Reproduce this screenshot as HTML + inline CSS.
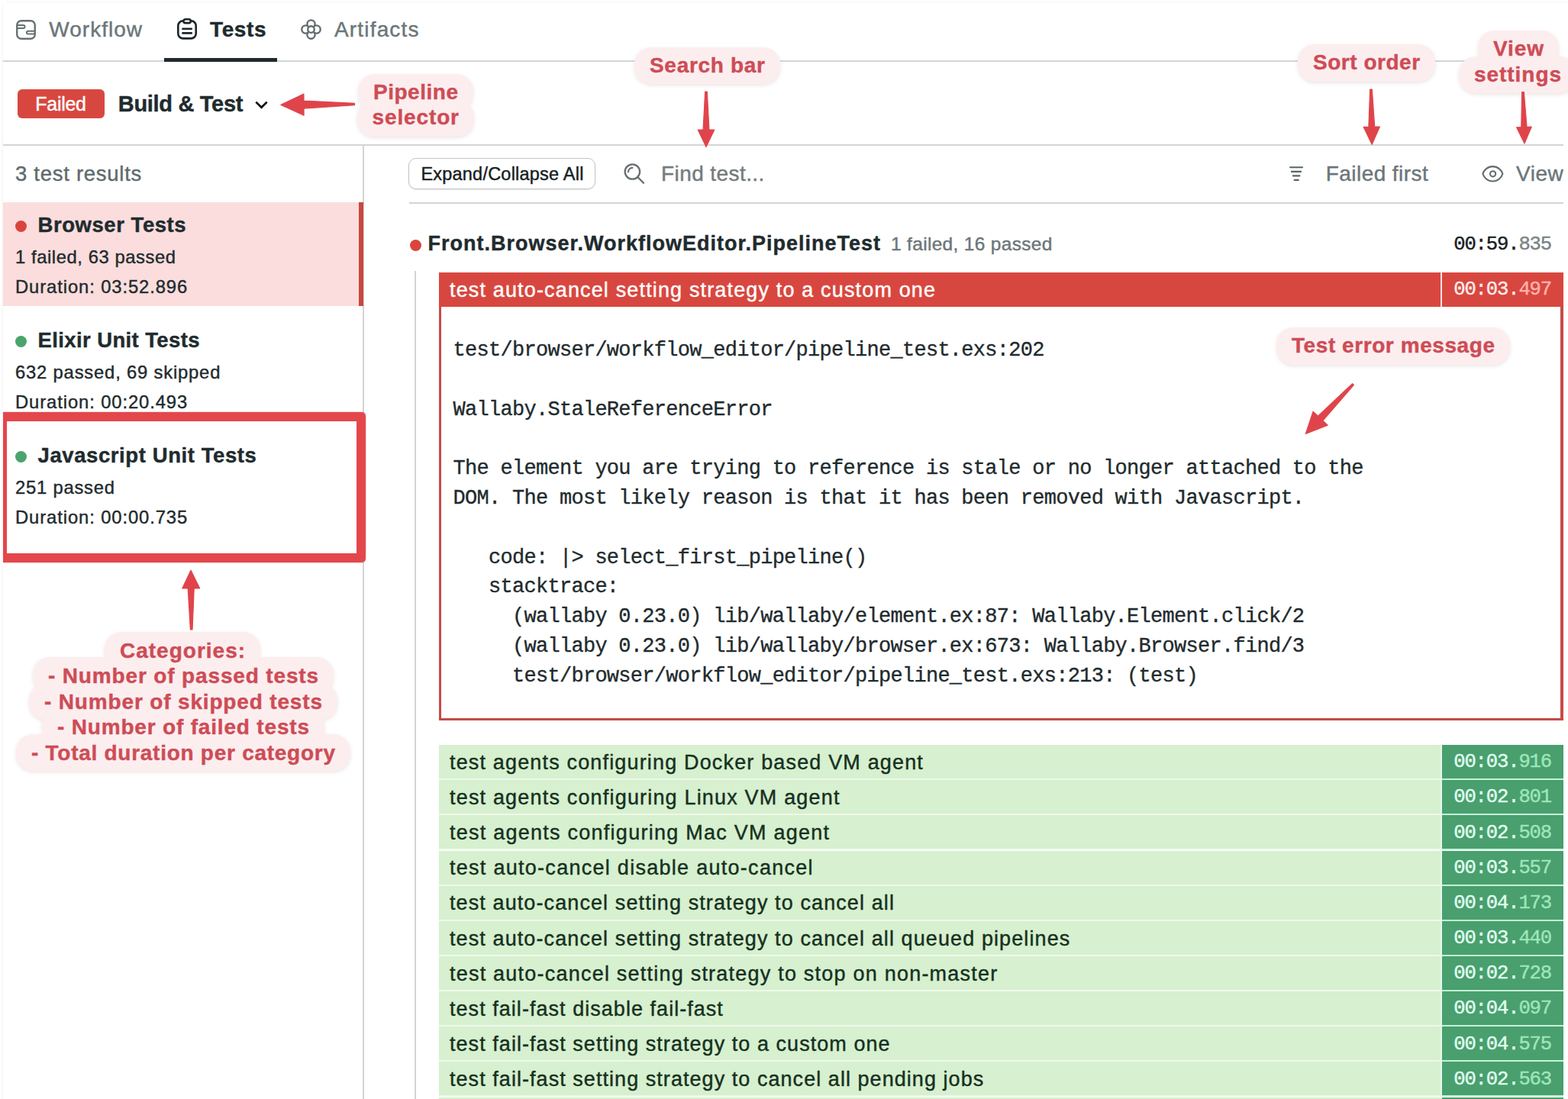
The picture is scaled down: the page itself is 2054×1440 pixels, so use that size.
<!DOCTYPE html>
<html lang="en">
<head>
<meta charset="utf-8">
<title>Test results</title>
<style>
html,body{margin:0;padding:0;background:#fff;}
body{width:2054px;height:1440px;position:relative;overflow:hidden;font-family:'Liberation Sans',sans-serif;color:#1f2b2e;}
.t{position:absolute;white-space:pre;-webkit-text-stroke:0.42px currentColor;}
.abs{position:absolute;}
.hl{position:absolute;height:1.7px;background:#d3d6d6;}
.vl{position:absolute;width:1.7px;background:#d3d5d5;}
.dot{position:absolute;width:15px;height:15px;border-radius:50%;}
.row{position:absolute;left:575px;width:1312px;height:44px;background:#d7f0cf;}
.rt{position:absolute;left:1889px;width:159px;height:44px;background:#499f6e;}
.pill{position:absolute;background:#fceeef;border-radius:22px;}
.pills{position:absolute;left:0;top:0;filter:drop-shadow(0 2px 2.5px rgba(90,40,40,.12));}
svg{position:absolute;overflow:visible;}
</style>
</head>
<body>

<div class="abs" style="left:8px;top:1px;width:2046px;height:3px;background:#fafafa"></div>
<div class="abs" style="left:2px;top:8px;width:2px;height:1432px;background:#f8f8f8"></div>
<nav>
<div class="hl" style="left:4px;top:79px;width:2044px"></div>
<div class="abs" style="left:215px;top:76px;width:148px;height:5px;background:#1f2b2e"></div>
<svg style="left:21px;top:26px" width="26" height="26" viewBox="0 0 26 26" fill="none" stroke="#667174" stroke-width="2.4" stroke-linejoin="round"><rect x="1.25" y="1.25" width="23.5" height="23.5" rx="5.6"/><path d="M1.4 7.1h8.2a1.95 1.95 0 0 1 0 3.9H1.4" stroke-width="2"/><path d="M24.6 14.7h-8.8a1.9 1.9 0 0 0 0 3.8h8.8" stroke-width="2"/></svg>
<span class="t" style="left:64.3px;top:21.6px;font-size:28px;line-height:34px;color:#6b7679;letter-spacing:1.01px;">Workflow</span>
<svg style="left:232px;top:24px" width="26" height="28" viewBox="0 0 26 28" fill="none" stroke="#1c2628" stroke-width="2.6" stroke-linecap="round" stroke-linejoin="round"><rect x="1.3" y="3.4" width="23.4" height="23" rx="6.4"/><rect x="8.4" y="1.3" width="9.4" height="4.8" rx="2.4" fill="#fff"/><path d="M7.4 13.7h11.4M7.4 19.4h11.4"/></svg>
<span class="t" style="left:275.0px;top:21.6px;font-size:28px;line-height:34px;color:#1f2b2e;font-weight:700;letter-spacing:0.63px;">Tests</span>
<svg style="left:394px;top:25.2px" width="27" height="27" viewBox="0 0 27 27" fill="none" stroke="#626b6e" stroke-width="2.35"><circle cx="13.5" cy="6.4" r="5.1"/><circle cx="13.5" cy="20.6" r="5.1"/><circle cx="6.4" cy="13.5" r="5.1"/><circle cx="20.6" cy="13.5" r="5.1"/><circle cx="13.5" cy="13.5" r="4.3" fill="#fff"/></svg>
<span class="t" style="left:438.0px;top:21.6px;font-size:28px;line-height:34px;color:#6b7679;letter-spacing:1.17px;">Artifacts</span>
</nav>
<header>
<div class="abs" style="left:23px;top:117px;width:114px;height:38px;border-radius:6px;background:#d8473f"></div>
<span class="t" style="left:46.3px;top:120.6px;font-size:25px;line-height:30px;color:#fff;letter-spacing:-0.28px;">Failed</span>
<span class="t" style="left:154.8px;top:118.6px;font-size:29px;line-height:35px;color:#1f2b2e;font-weight:700;letter-spacing:-0.31px;">Build &amp; Test</span>
<svg style="left:333.5px;top:131.8px" width="17" height="11" viewBox="0 0 17 11" fill="none" stroke="#0c0c0c" stroke-width="2.7"><path d="M1.3 1.6l7.2 7.2 7.2-7.2"/></svg>
<div class="hl" style="left:4px;top:189px;width:2044px"></div>
</header>
<aside>
<div class="vl" style="left:475px;top:190px;height:1250px"></div>
<span class="t" style="left:20.0px;top:211.0px;font-size:27.5px;line-height:33px;color:#5f6b6e;letter-spacing:0.72px;">3 test results</span>
<div class="abs" style="left:4px;top:265px;width:472px;height:136px;background:#fbdddd"></div>
<div class="abs" style="left:470px;top:265px;width:6px;height:136px;background:#c9483f"></div>
<section>
<div class="dot" style="left:19.5px;top:289px;background:#d9453d"></div>
<span class="t" style="left:49.5px;top:278.2px;font-size:27.5px;line-height:33px;color:#1f2b2e;font-weight:700;letter-spacing:0.55px;">Browser Tests</span>
<span class="t" style="left:20.0px;top:321.9px;font-size:23.8px;line-height:29px;color:#1f2b2e;letter-spacing:0.57px;">1 failed, 63 passed</span>
<span class="t" style="left:20.0px;top:360.6px;font-size:23.8px;line-height:29px;color:#1f2b2e;letter-spacing:0.90px;">Duration: 03:52.896</span>
</section>
<section>
<div class="dot" style="left:19.5px;top:440px;background:#4aa46c"></div>
<span class="t" style="left:49.5px;top:429.2px;font-size:27.5px;line-height:33px;color:#1f2b2e;font-weight:700;letter-spacing:0.39px;">Elixir Unit Tests</span>
<span class="t" style="left:20.0px;top:472.9px;font-size:23.8px;line-height:29px;color:#1f2b2e;letter-spacing:0.81px;">632 passed, 69 skipped</span>
<span class="t" style="left:20.0px;top:511.6px;font-size:23.8px;line-height:29px;color:#1f2b2e;letter-spacing:0.90px;">Duration: 00:20.493</span>
</section>
<section>
<div class="dot" style="left:19.5px;top:591px;background:#4aa46c"></div>
<span class="t" style="left:49.5px;top:580.2px;font-size:27.5px;line-height:33px;color:#1f2b2e;font-weight:700;letter-spacing:0.59px;">Javascript Unit Tests</span>
<span class="t" style="left:20.0px;top:623.9px;font-size:23.8px;line-height:29px;color:#1f2b2e;letter-spacing:0.77px;">251 passed</span>
<span class="t" style="left:20.0px;top:662.6px;font-size:23.8px;line-height:29px;color:#1f2b2e;letter-spacing:0.90px;">Duration: 00:00.735</span>
</section>
</aside>
<main>
<div class="abs" style="left:535px;top:207px;width:242.6px;height:39.1px;border:1.7px solid #c2c6c6;border-radius:10px;background:#fff;box-shadow:0 1px 1.5px rgba(0,0,0,.10)"></div>
<span class="t" style="left:551.4px;top:213.9px;font-size:23.5px;line-height:28px;color:#16211f;letter-spacing:0.22px;">Expand/Collapse All</span>
<svg style="left:817px;top:214px" width="28" height="28" viewBox="0 0 28 28" fill="none" stroke="#666e6f" stroke-width="2.3" stroke-linecap="round"><circle cx="11.4" cy="11" r="9.7"/><path d="M18.4 18l7.6 7.8"/><path d="M6 11.2a5.6 5.6 0 0 1 5.4-5.4" stroke-width="2.2"/></svg>
<span class="t" style="left:866.0px;top:210.8px;font-size:28px;line-height:34px;color:#747b7c;letter-spacing:0.42px;">Find test...</span>
<svg style="left:1688px;top:217px" width="20" height="21" viewBox="0 0 20 21" fill="none" stroke="#5b6466" stroke-width="2.2" stroke-linecap="round"><path d="M2.1 2.25h15.9M3.9 7.9h12.2M5.9 13.3h8.5M7.7 18.9h5.1"/></svg>
<span class="t" style="left:1736.8px;top:210.7px;font-size:28px;line-height:34px;color:#6b7679;letter-spacing:0.43px;">Failed first</span>
<svg style="left:1941px;top:217px" width="29" height="22" viewBox="0 0 29 22" fill="none" stroke="#636c6e" stroke-width="2.1" stroke-linejoin="round"><path d="M1.4 10.8C2.8 6 7.8 1.1 14.4 1.1S26 6 27.4 10.8C26 15.6 21 20.5 14.4 20.5S2.8 15.6 1.4 10.8z"/><circle cx="14.6" cy="10.8" r="3.6"/></svg>
<span class="t" style="left:1986.0px;top:210.7px;font-size:28px;line-height:34px;color:#6b7679;letter-spacing:0.54px;">View</span>
<div class="hl" style="left:536px;top:265px;width:1512px"></div>
<div class="dot" style="left:536.5px;top:313.5px;background:#d9453d"></div>
<span class="t" style="left:560.5px;top:303.2px;font-size:27px;line-height:32px;color:#1f2b2e;font-weight:700;letter-spacing:1.00px;">Front.Browser.WorkflowEditor.PipelineTest</span>
<span class="t" style="left:1167.0px;top:305.4px;font-size:24.5px;line-height:29px;color:#6b7679;letter-spacing:0.32px;">1 failed, 16 passed</span>
<span class="t" style="left:1904.2px;top:305.3px;font-size:25.6px;line-height:31px;color:#16211f;font-family:'Liberation Mono', monospace;letter-spacing:-1.16px;">00:59.<span style="color:#7b8486">835</span></span>
<div class="vl" style="left:543px;top:355px;height:1085px"></div>
<article>
<div class="abs" style="left:575px;top:357px;width:1473px;height:587px;background:#c54b48"></div>
<div class="abs" style="left:575px;top:357px;width:1473px;height:45px;background:#d8473f"></div>
<div class="abs" style="left:578px;top:401.5px;width:1466.3px;height:539.3px;background:#fff"></div>
<div class="abs" style="left:1887px;top:357px;width:2px;height:45px;background:#fbe4e2"></div>
<span class="t" style="left:589.0px;top:363.6px;font-size:27px;line-height:32px;color:#fff;letter-spacing:1.15px;">test auto-cancel setting strategy to a custom one</span>
<span class="t" style="left:1904.2px;top:364.3px;font-size:25.6px;line-height:31px;color:#ffecec;font-family:'Liberation Mono', monospace;letter-spacing:-1.16px;">00:03.<span style="color:#ffb3ad">497</span></span>
<pre class="abs" style="left:593.6px;top:440.1px;margin:0;font-family:'Liberation Mono', monospace;font-size:27px;letter-spacing:-0.72px;line-height:38.8px;color:#1f2b2e;-webkit-text-stroke:0.35px #1f2b2e">test/browser/workflow_editor/pipeline_test.exs:202

Wallaby.StaleReferenceError

The element you are trying to reference is stale or no longer attached to the
DOM. The most likely reason is that it has been removed with Javascript.

   code: |&gt; select_first_pipeline()
   stacktrace:
     (wallaby 0.23.0) lib/wallaby/element.ex:87: Wallaby.Element.click/2
     (wallaby 0.23.0) lib/wallaby/browser.ex:673: Wallaby.Browser.find/3
     test/browser/workflow_editor/pipeline_test.exs:213: (test)</pre>
</article>
<div class="abs" style="left:1887px;top:976px;width:2px;height:464px;background:#e2f8e8"></div>
<div class="row" style="top:976.0px"></div><div class="rt" style="top:976.0px"></div>
<div class="abs" style="left:1889px;top:1020.0px;width:159px;height:2.2px;background:#c4f3d8"></div>
<div class="abs" style="left:575px;top:1020.0px;width:1312px;height:2.2px;background:#eef9ea"></div>
<span class="t" style="left:589.0px;top:982.8px;font-size:27px;line-height:32px;color:#16301f;letter-spacing:1.16px;">test agents configuring Docker based VM agent</span>
<span class="t" style="left:1904.2px;top:983.3px;font-size:25.6px;line-height:31px;color:#e0fff0;font-family:'Liberation Mono', monospace;letter-spacing:-1.16px;">00:03.<span style="color:#9ee6b9">916</span></span>
<div class="row" style="top:1022.1px"></div><div class="rt" style="top:1022.1px"></div>
<div class="abs" style="left:1889px;top:1066.2px;width:159px;height:2.2px;background:#c4f3d8"></div>
<div class="abs" style="left:575px;top:1066.2px;width:1312px;height:2.2px;background:#eef9ea"></div>
<span class="t" style="left:589.0px;top:1029.0px;font-size:27px;line-height:32px;color:#16301f;letter-spacing:1.18px;">test agents configuring Linux VM agent</span>
<span class="t" style="left:1904.2px;top:1029.4px;font-size:25.6px;line-height:31px;color:#e0fff0;font-family:'Liberation Mono', monospace;letter-spacing:-1.16px;">00:02.<span style="color:#9ee6b9">801</span></span>
<div class="row" style="top:1068.3px"></div><div class="rt" style="top:1068.3px"></div>
<div class="abs" style="left:1889px;top:1112.3px;width:159px;height:2.2px;background:#c4f3d8"></div>
<div class="abs" style="left:575px;top:1112.3px;width:1312px;height:2.2px;background:#eef9ea"></div>
<span class="t" style="left:589.0px;top:1075.1px;font-size:27px;line-height:32px;color:#16301f;letter-spacing:1.25px;">test agents configuring Mac VM agent</span>
<span class="t" style="left:1904.2px;top:1075.6px;font-size:25.6px;line-height:31px;color:#e0fff0;font-family:'Liberation Mono', monospace;letter-spacing:-1.16px;">00:02.<span style="color:#9ee6b9">508</span></span>
<div class="row" style="top:1114.5px"></div><div class="rt" style="top:1114.5px"></div>
<div class="abs" style="left:1889px;top:1158.5px;width:159px;height:2.2px;background:#c4f3d8"></div>
<div class="abs" style="left:575px;top:1158.5px;width:1312px;height:2.2px;background:#eef9ea"></div>
<span class="t" style="left:589.0px;top:1121.3px;font-size:27px;line-height:32px;color:#16301f;letter-spacing:1.28px;">test auto-cancel disable auto-cancel</span>
<span class="t" style="left:1904.2px;top:1121.7px;font-size:25.6px;line-height:31px;color:#e0fff0;font-family:'Liberation Mono', monospace;letter-spacing:-1.16px;">00:03.<span style="color:#9ee6b9">557</span></span>
<div class="row" style="top:1160.6px"></div><div class="rt" style="top:1160.6px"></div>
<div class="abs" style="left:1889px;top:1204.6px;width:159px;height:2.2px;background:#c4f3d8"></div>
<div class="abs" style="left:575px;top:1204.6px;width:1312px;height:2.2px;background:#eef9ea"></div>
<span class="t" style="left:589.0px;top:1167.4px;font-size:27px;line-height:32px;color:#16301f;letter-spacing:1.10px;">test auto-cancel setting strategy to cancel all</span>
<span class="t" style="left:1904.2px;top:1167.9px;font-size:25.6px;line-height:31px;color:#e0fff0;font-family:'Liberation Mono', monospace;letter-spacing:-1.16px;">00:04.<span style="color:#9ee6b9">173</span></span>
<div class="row" style="top:1206.8px"></div><div class="rt" style="top:1206.8px"></div>
<div class="abs" style="left:1889px;top:1250.8px;width:159px;height:2.2px;background:#c4f3d8"></div>
<div class="abs" style="left:575px;top:1250.8px;width:1312px;height:2.2px;background:#eef9ea"></div>
<span class="t" style="left:589.0px;top:1213.6px;font-size:27px;line-height:32px;color:#16301f;letter-spacing:1.10px;">test auto-cancel setting strategy to cancel all queued pipelines</span>
<span class="t" style="left:1904.2px;top:1214.0px;font-size:25.6px;line-height:31px;color:#e0fff0;font-family:'Liberation Mono', monospace;letter-spacing:-1.16px;">00:03.<span style="color:#9ee6b9">440</span></span>
<div class="row" style="top:1252.9px"></div><div class="rt" style="top:1252.9px"></div>
<div class="abs" style="left:1889px;top:1296.9px;width:159px;height:2.2px;background:#c4f3d8"></div>
<div class="abs" style="left:575px;top:1296.9px;width:1312px;height:2.2px;background:#eef9ea"></div>
<span class="t" style="left:589.0px;top:1259.7px;font-size:27px;line-height:32px;color:#16301f;letter-spacing:1.22px;">test auto-cancel setting strategy to stop on non-master</span>
<span class="t" style="left:1904.2px;top:1260.2px;font-size:25.6px;line-height:31px;color:#e0fff0;font-family:'Liberation Mono', monospace;letter-spacing:-1.16px;">00:02.<span style="color:#9ee6b9">728</span></span>
<div class="row" style="top:1299.0px"></div><div class="rt" style="top:1299.0px"></div>
<div class="abs" style="left:1889px;top:1343.0px;width:159px;height:2.2px;background:#c4f3d8"></div>
<div class="abs" style="left:575px;top:1343.0px;width:1312px;height:2.2px;background:#eef9ea"></div>
<span class="t" style="left:589.0px;top:1305.9px;font-size:27px;line-height:32px;color:#16301f;letter-spacing:1.04px;">test fail-fast disable fail-fast</span>
<span class="t" style="left:1904.2px;top:1306.3px;font-size:25.6px;line-height:31px;color:#e0fff0;font-family:'Liberation Mono', monospace;letter-spacing:-1.16px;">00:04.<span style="color:#9ee6b9">097</span></span>
<div class="row" style="top:1345.2px"></div><div class="rt" style="top:1345.2px"></div>
<div class="abs" style="left:1889px;top:1389.2px;width:159px;height:2.2px;background:#c4f3d8"></div>
<div class="abs" style="left:575px;top:1389.2px;width:1312px;height:2.2px;background:#eef9ea"></div>
<span class="t" style="left:589.0px;top:1352.0px;font-size:27px;line-height:32px;color:#16301f;letter-spacing:1.05px;">test fail-fast setting strategy to a custom one</span>
<span class="t" style="left:1904.2px;top:1352.5px;font-size:25.6px;line-height:31px;color:#e0fff0;font-family:'Liberation Mono', monospace;letter-spacing:-1.16px;">00:04.<span style="color:#9ee6b9">575</span></span>
<div class="row" style="top:1391.3px"></div><div class="rt" style="top:1391.3px"></div>
<div class="abs" style="left:1889px;top:1435.3px;width:159px;height:2.2px;background:#c4f3d8"></div>
<div class="abs" style="left:575px;top:1435.3px;width:1312px;height:2.2px;background:#eef9ea"></div>
<span class="t" style="left:589.0px;top:1398.2px;font-size:27px;line-height:32px;color:#16301f;letter-spacing:1.05px;">test fail-fast setting strategy to cancel all pending jobs</span>
<span class="t" style="left:1904.2px;top:1398.6px;font-size:25.6px;line-height:31px;color:#e0fff0;font-family:'Liberation Mono', monospace;letter-spacing:-1.16px;">00:02.<span style="color:#9ee6b9">563</span></span>
<div class="row" style="top:1437.5px"></div><div class="rt" style="top:1437.5px"></div>
</main>
<div class="abs" id="notes" style="left:0;top:0">
<div class="abs" style="left:4.2px;top:530px;width:490px;height:220px;overflow:hidden"><div class="abs" style="left:-7.3px;top:10.3px;width:458.6px;height:172.4px;border:12px solid #e4474b;border-radius:5px;box-shadow:0 0 2px rgba(150,40,40,.5)"></div></div>
<div class="pills"><div class="pill" style="left:469px;top:97.0px;width:151px;height:48px;border-radius:22px"></div><div class="pill" style="left:467.6px;top:130.5px;width:153.39999999999998px;height:48px;border-radius:22px"></div></div>
<span class="t" style="left:489.0px;top:103.7px;font-size:28px;line-height:34px;color:#ce4c56;font-weight:700;letter-spacing:0.52px;">Pipeline</span>
<span class="t" style="left:487.6px;top:137.2px;font-size:28px;line-height:34px;color:#ce4c56;font-weight:700;letter-spacing:0.86px;">selector</span>
<svg style="left:0;top:0" width="1" height="1"><path d="M464.5 135.3 L398.0 132.1 L397.9 123.1 L368.0 137.4 L398.1 151.1 L398.0 142.1 L464.5 137.7Z" fill="#e0444b" stroke="#e0444b" stroke-width="1.2" stroke-linejoin="round"/></svg>
<div class="pills"><div class="pill" style="left:831px;top:62.0px;width:191px;height:48px;border-radius:22px"></div></div>
<span class="t" style="left:851.0px;top:69.3px;font-size:28px;line-height:34px;color:#ce4c56;font-weight:700;letter-spacing:0.69px;">Search bar</span>
<svg style="left:0;top:0" width="1" height="1"><path d="M923.7 120.0 L921.1 170.0 L914.2 170.0 L925.0 192.5 L935.8 170.0 L928.9 170.0 L926.3 120.0Z" fill="#e0444b" stroke="#e0444b" stroke-width="1.2" stroke-linejoin="round"/></svg>
<div class="pills"><div class="pill" style="left:1700px;top:58.0px;width:180px;height:49px;border-radius:22px"></div></div>
<span class="t" style="left:1720.0px;top:65.3px;font-size:28px;line-height:34px;color:#ce4c56;font-weight:700;letter-spacing:0.52px;">Sort order</span>
<svg style="left:0;top:0" width="1" height="1"><path d="M1794.7 117.0 L1792.9 166.3 L1786.2 166.4 L1797.2 189.2 L1807.4 166.0 L1800.7 166.1 L1797.3 117.0Z" fill="#e0444b" stroke="#e0444b" stroke-width="1.2" stroke-linejoin="round"/></svg>
<div class="pills"><div class="pill" style="left:1936px;top:40.0px;width:106px;height:48px;border-radius:22px"></div><div class="pill" style="left:1911px;top:73.5px;width:154px;height:48px;border-radius:22px"></div></div>
<span class="t" style="left:1956.0px;top:47.3px;font-size:28px;line-height:34px;color:#ce4c56;font-weight:700;letter-spacing:0.90px;">View</span>
<span class="t" style="left:1931.0px;top:80.8px;font-size:28px;line-height:34px;color:#ce4c56;font-weight:700;letter-spacing:0.95px;">settings</span>
<svg style="left:0;top:0" width="1" height="1"><path d="M1993.7 120.5 L1992.8 166.6 L1986.6 166.8 L1997.0 188.0 L2006.2 166.2 L2000.0 166.4 L1996.3 120.5Z" fill="#e0444b" stroke="#e0444b" stroke-width="1.2" stroke-linejoin="round"/></svg>
<div class="pills"><div class="pill" style="left:1672px;top:429.0px;width:306px;height:49px;border-radius:22px"></div></div>
<span class="t" style="left:1692.0px;top:436.3px;font-size:28px;line-height:34px;color:#ce4c56;font-weight:700;letter-spacing:0.57px;">Test error message</span>
<svg style="left:0;top:0" width="1" height="1"><path d="M1771.6 502.6 L1726.5 545.1 L1720.1 539.1 L1710.3 568.4 L1739.2 557.3 L1732.9 551.2 L1773.4 504.4Z" fill="#e0444b" stroke="#e0444b" stroke-width="1.2" stroke-linejoin="round"/></svg>
<div class="pills"><div class="pill" style="left:137px;top:827.6px;width:204px;height:48px;border-radius:22px"></div><div class="pill" style="left:43px;top:861.1px;width:394px;height:48px;border-radius:22px"></div><div class="pill" style="left:38px;top:894.6px;width:404px;height:48px;border-radius:22px"></div><div class="pill" style="left:55px;top:928.1px;width:370px;height:48px;border-radius:22px"></div><div class="pill" style="left:21px;top:961.6px;width:438px;height:48px;border-radius:22px"></div></div>
<span class="t" style="left:157.0px;top:835.8px;font-size:28px;line-height:34px;color:#ce4c56;font-weight:700;letter-spacing:1.00px;">Categories:</span>
<span class="t" style="left:63.0px;top:869.3px;font-size:28px;line-height:34px;color:#ce4c56;font-weight:700;letter-spacing:0.85px;">- Number of passed tests</span>
<span class="t" style="left:58.0px;top:902.8px;font-size:28px;line-height:34px;color:#ce4c56;font-weight:700;letter-spacing:0.84px;">- Number of skipped tests</span>
<span class="t" style="left:75.0px;top:936.3px;font-size:28px;line-height:34px;color:#ce4c56;font-weight:700;letter-spacing:0.82px;">- Number of failed tests</span>
<span class="t" style="left:41.0px;top:969.8px;font-size:28px;line-height:34px;color:#ce4c56;font-weight:700;letter-spacing:0.73px;">- Total duration per category</span>
<svg style="left:0;top:0" width="1" height="1"><path d="M252.0 825.0 L254.2 770.9 L261.6 770.8 L250.0 747.2 L238.8 771.0 L246.2 770.9 L249.4 825.0Z" fill="#e0444b" stroke="#e0444b" stroke-width="1.2" stroke-linejoin="round"/></svg>
</div>
</body></html>
